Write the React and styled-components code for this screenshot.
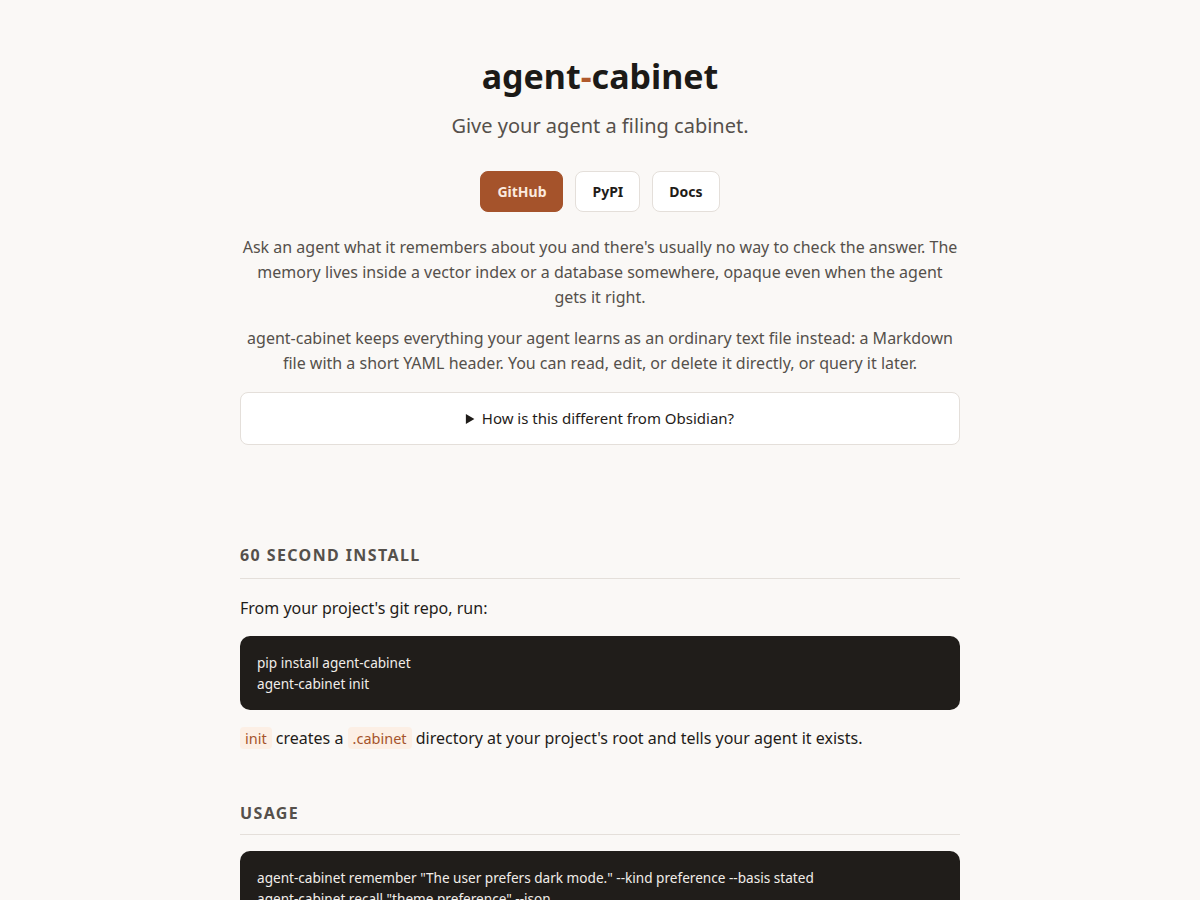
import React from 'react';
import styled, { createGlobalStyle } from 'styled-components';

const GlobalStyle = createGlobalStyle`
  body {
    margin: 0;
    background: #faf8f6;
    color: #1f1c19;
    font-family: "Noto Sans", "Open Sans", sans-serif;
  }
`

const Page = styled.main`
  width: 720px;
  margin: 0 auto;
  padding: 50px 0 40px;
`

const Hero = styled.header`
  display: flex;
  flex-direction: column;
  align-items: center;
  text-align: center;
`

const Title = styled.h1`
  margin: 0;
  font-size: 34px;
  font-weight: 700;
  line-height: 52px;
  color: #1c1a17;

  span {
    color: #b0592c;
  }
`

const Tagline = styled.p`
  margin: 10px 0 0;
  font-size: 20px;
  line-height: 28px;
  color: #55504b;
`

const Links = styled.nav`
  display: flex;
  gap: 12px;
  margin-top: 31px;
`

const LinkButton = styled.a`
  display: inline-flex;
  align-items: center;
  height: 41px;
  box-sizing: border-box;
  padding: 0 16px;
  border-radius: 8px;
  font-size: 14px;
  font-weight: 700;
  text-decoration: none;
  background: ${p => (p.$primary ? '#a5532b' : '#fff')};
  color: ${p => (p.$primary ? '#fbeadf' : '#1f1c19')};
  border: 1px solid ${p => (p.$primary ? '#a5532b' : '#e4dfda')};
`

const Lead = styled.p`
  margin: ${p => (p.$first ? '23px' : '16px')} 0 0;
  font-size: 16px;
  line-height: 25px;
  color: #55504b;
`

const Details = styled.details`
  width: 100%;
  box-sizing: border-box;
  margin-top: 16px;
  background: #fff;
  border: 1px solid #e4dfda;
  border-radius: 8px;

  summary {
    padding: 14px 16px;
    font-size: 15px;
    line-height: 23px;
    color: #1f1c19;
    cursor: pointer;
  }
`

const Section = styled.section`
  margin-top: ${p => p.$gap || '99px'};
`

const SectionTitle = styled.h2`
  margin: 0;
  padding-bottom: ${p => p.$pad || '11px'};
  border-bottom: 1px solid #e4dfda;
  font-size: 16px;
  font-weight: 700;
  line-height: 23px;
  letter-spacing: 1.4px;
  text-transform: uppercase;
  color: #55504b;
`

const Text = styled.p`
  margin: ${p => p.$top || '16px'} 0 0;
  font-size: 16px;
  line-height: 26px;
  color: #1f1c19;
`

const CodeBlock = styled.pre`
  margin: ${p => p.$top || '16px'} 0 0;
  padding: 16px 17px;
  background: #201d1a;
  border-radius: 10px;
  color: #f1ede9;
  font-family: "Noto Sans", sans-serif;
  font-size: 13.6px;
  line-height: 21px;
  white-space: pre;
  overflow: hidden;
`

const Code = styled.code`
  padding: 1px 5px;
  border-radius: 4px;
  background: #fcefe5;
  color: #a5532b;
  font-family: "Noto Sans", sans-serif;
  font-size: 14.5px;
`

export default function App() {
  return (
    <>
      <GlobalStyle />
      <Page>
        <Hero>
          <Title>agent<span>-</span>cabinet</Title>
          <Tagline>Give your agent a filing cabinet.</Tagline>
          <Links>
            <LinkButton $primary href="#">GitHub</LinkButton>
            <LinkButton href="#">PyPI</LinkButton>
            <LinkButton href="#">Docs</LinkButton>
          </Links>
          <Lead $first>
            Ask an agent what it remembers about you and there's usually no way to check the answer. The memory lives inside a vector index or a database somewhere, opaque even when the agent gets it right.
          </Lead>
          <Lead>
            agent-cabinet keeps everything your agent learns as an ordinary text file instead: a Markdown file with a short YAML header. You can read, edit, or delete it directly, or query it later.
          </Lead>
          <Details>
            <summary>How is this different from Obsidian?</summary>
          </Details>
        </Hero>

        <Section>
          <SectionTitle>60 second install</SectionTitle>
          <Text>From your project's git repo, run:</Text>
          <CodeBlock $top="15px">{`pip install agent-cabinet
agent-cabinet init`}</CodeBlock>
          <Text $top="15px">
            <Code>init</Code> creates a <Code>.cabinet</Code> directory at your project's root and tells your agent it exists.
          </Text>
        </Section>

        <Section $gap="51px">
          <SectionTitle $pad="9px">Usage</SectionTitle>
          <CodeBlock>{`agent-cabinet remember "The user prefers dark mode." --kind preference --basis stated
agent-cabinet recall "theme preference" --json`}</CodeBlock>
        </Section>
      </Page>
    </>
  );
}
